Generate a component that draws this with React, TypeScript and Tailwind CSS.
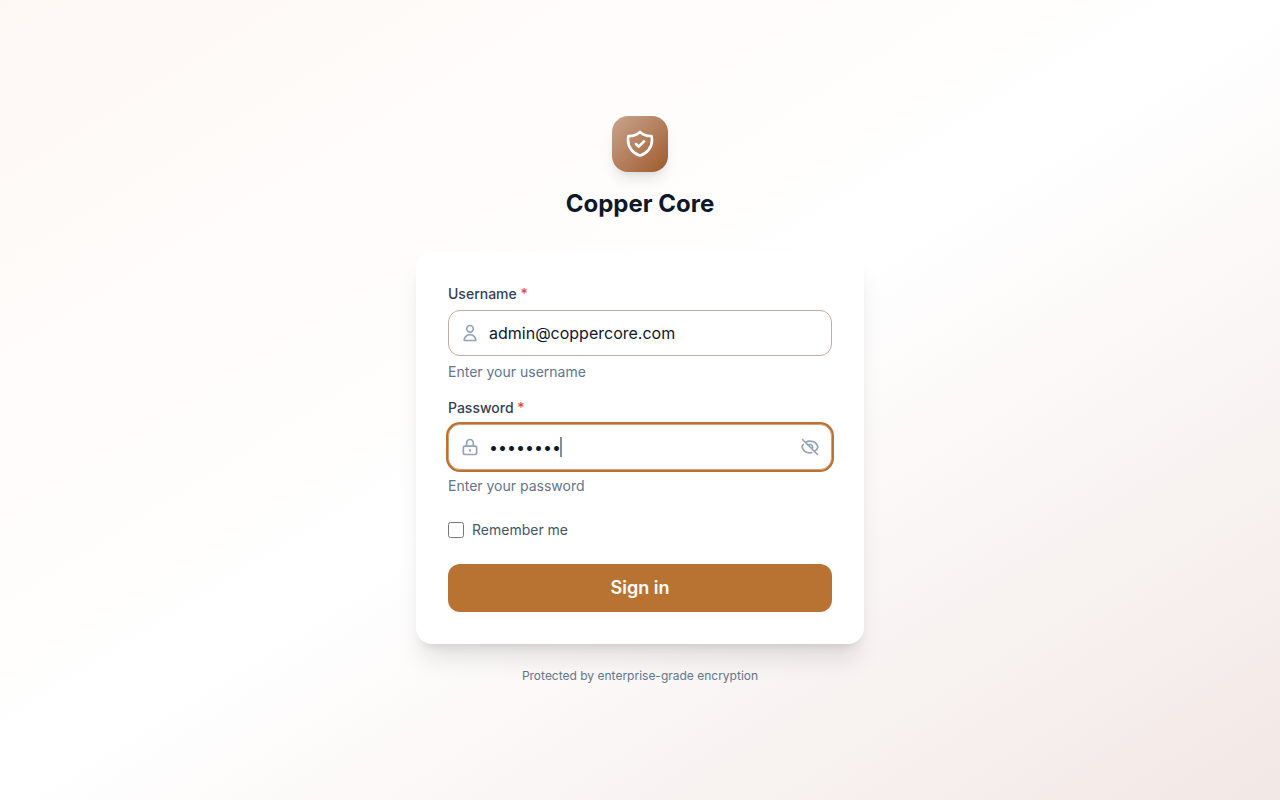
import { useState } from "react";
import {
  HiOutlineEye,
  HiOutlineEyeOff,
  HiOutlineLockClosed,
  HiOutlineShieldCheck,
  HiOutlineUser,
} from "react-icons/hi";

const labelStyle = "block text-sm font-medium text-[#334155]";
const hintStyle = "mt-1.5 text-sm text-[#64748b]";
const inputStyle =
  "block w-full rounded-xl border border-[#c0aea2] bg-white py-2.5 pl-10 text-base leading-6 text-[#0f172a] caret-transparent outline-none focus:border-[#cda27c] focus:ring-2 focus:ring-[#b87333]";

export default function App() {
  const [username, setUsername] = useState("admin@coppercore.com");
  const [password, setPassword] = useState("password");
  const [visible, setVisible] = useState(false);

  return (
    <main className="flex min-h-screen items-center justify-center bg-linear-to-br from-[#fef8f5] via-white to-[#f2e8e5] p-4 font-['Inter',sans-serif]">
      <div className="w-full max-w-md">
        <header className="mb-8 flex flex-col items-center">
          <div className="mb-4 flex size-14 items-center justify-center rounded-2xl bg-linear-to-br from-[#c9a58e] to-[#9e5a29] text-white shadow-lg">
            <HiOutlineShieldCheck className="size-8" aria-hidden="true" />
          </div>
          <h1 className="text-2xl font-bold text-[#0f172a]">Copper Core</h1>
        </header>

        <form
          className="rounded-2xl bg-white p-8 shadow-xl"
          onSubmit={(event) => event.preventDefault()}
        >
          <div>
            <label htmlFor="username" className={labelStyle}>
              Username <span className="text-[#ef4444]">*</span>
            </label>
            <div className="relative mt-1.5">
              <HiOutlineUser
                className="pointer-events-none absolute inset-y-0 left-3 my-auto size-5 text-[#94a3b8]"
                aria-hidden="true"
              />
              <input
                id="username"
                type="text"
                className={`${inputStyle} pr-4`}
                value={username}
                onChange={(event) => setUsername(event.target.value)}
              />
            </div>
            <p className={hintStyle}>Enter your username</p>
          </div>

          <div className="mt-4">
            <label htmlFor="password" className={labelStyle}>
              Password <span className="text-[#ef4444]">*</span>
            </label>
            <div className="relative mt-1.5">
              <HiOutlineLockClosed
                className="pointer-events-none absolute inset-y-0 left-3 my-auto size-5 text-[#94a3b8]"
                aria-hidden="true"
              />
              <input
                id="password"
                type={visible ? "text" : "password"}
                autoFocus
                className={`${inputStyle} pr-10`}
                value={password}
                onChange={(event) => setPassword(event.target.value)}
              />
              <span
                className="pointer-events-none absolute inset-y-0 left-28 my-auto h-5 w-0.5 bg-[#878b98]"
                aria-hidden="true"
              />
              <button
                type="button"
                aria-label={visible ? "Hide password" : "Show password"}
                className="absolute inset-y-0 right-3 flex items-center text-[#94a3b8]"
                onClick={() => setVisible(!visible)}
              >
                {visible ? (
                  <HiOutlineEye className="size-5" />
                ) : (
                  <HiOutlineEyeOff className="size-5" />
                )}
              </button>
            </div>
            <p className={hintStyle}>Enter your password</p>
          </div>

          <label className="mt-6 flex items-center gap-2 text-sm text-[#475569]">
            <input type="checkbox" className="size-4" />
            Remember me
          </label>

          <button
            type="submit"
            className="mt-6 w-full rounded-xl bg-[#b87333] py-2.5 text-lg font-semibold text-white"
          >
            Sign in
          </button>
        </form>

        <p className="mt-6 text-center text-xs text-[#64748b]">
          Protected by enterprise-grade encryption
        </p>
      </div>
    </main>
  );
}
